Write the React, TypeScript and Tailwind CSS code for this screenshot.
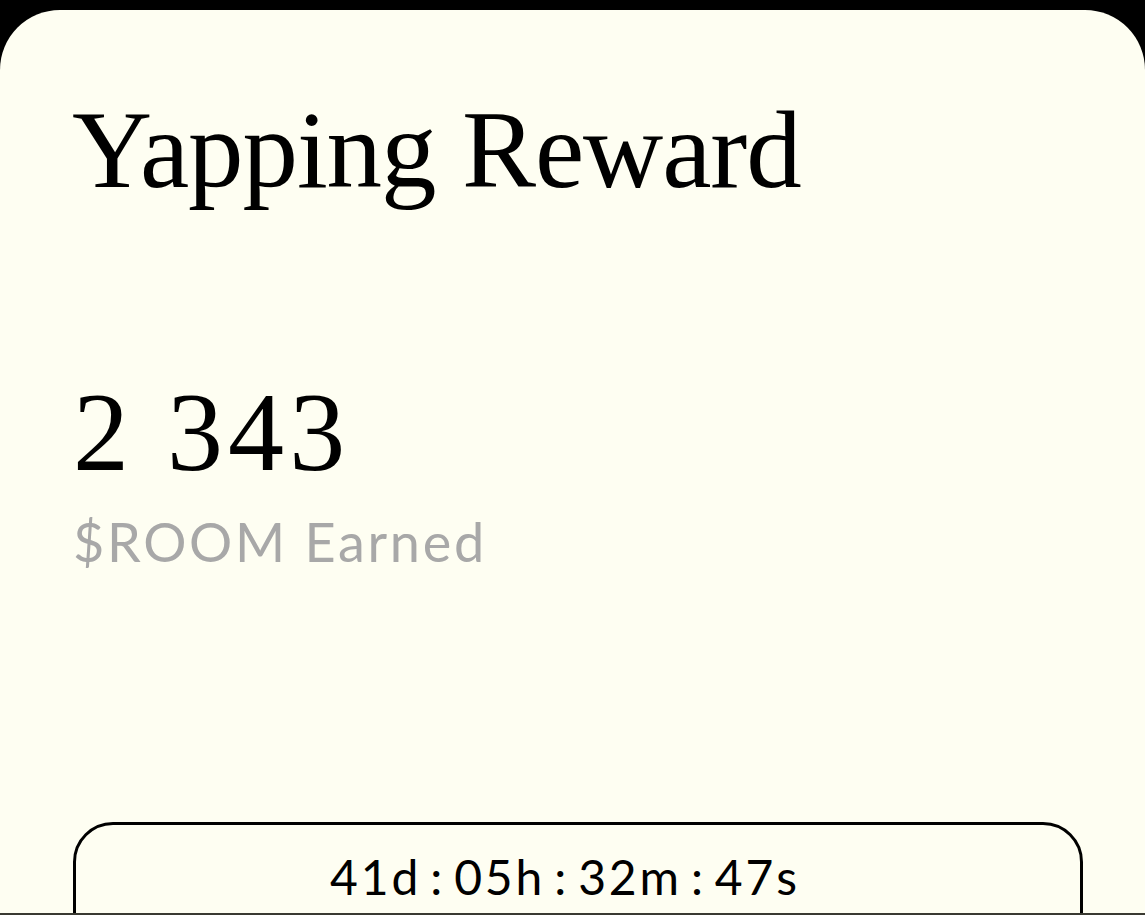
import React from "react";

function Colon() {
  return <span className="mx-[9px]">:</span>;
}

export default function App() {
  return (
    <div className="w-[1145px] h-[915px] bg-black flex flex-col overflow-hidden">
      <div className="h-[10px] shrink-0" />
      <div className="flex-1 bg-[#FEFEF2] rounded-t-[60px] overflow-hidden flex flex-col pl-[73px] pr-[62px] pt-[84px]">
        <h1
          className="text-[111px] leading-none text-black tracking-[-0.01em] -ml-[1px]"
          style={{ fontFamily: '"Liberation Serif", "DejaVu Serif", serif' }}
        >
          Yapping Reward
        </h1>
        <div
          className="mt-[171px] text-[112px] leading-none text-black tracking-[0.045em]"
          style={{ fontFamily: '"Liberation Serif", "DejaVu Serif", serif' }}
        >
          2 343
        </div>
        <div
          className="mt-[27px] text-[54px] leading-none text-[#A8A8A8] tracking-[0.05em]"
          style={{ fontFamily: 'Lato, "Noto Sans", sans-serif' }}
        >
          $ROOM Earned
        </div>
        <div className="mt-[253px] w-[1010px] shrink-0 h-[140px] border-[3px] border-black rounded-[40px] flex justify-center pt-[28px] pr-[26px]">
          <div
            className="text-[48px] leading-none text-black tracking-[0.06em]"
            style={{ fontFamily: 'Lato, "Noto Sans", sans-serif' }}
          >
            41d<Colon />05h<Colon />32m<Colon />47s
          </div>
        </div>
      </div>
      <div className="h-[2px] shrink-0 bg-[#3a3a32]" />
    </div>
  );
}
